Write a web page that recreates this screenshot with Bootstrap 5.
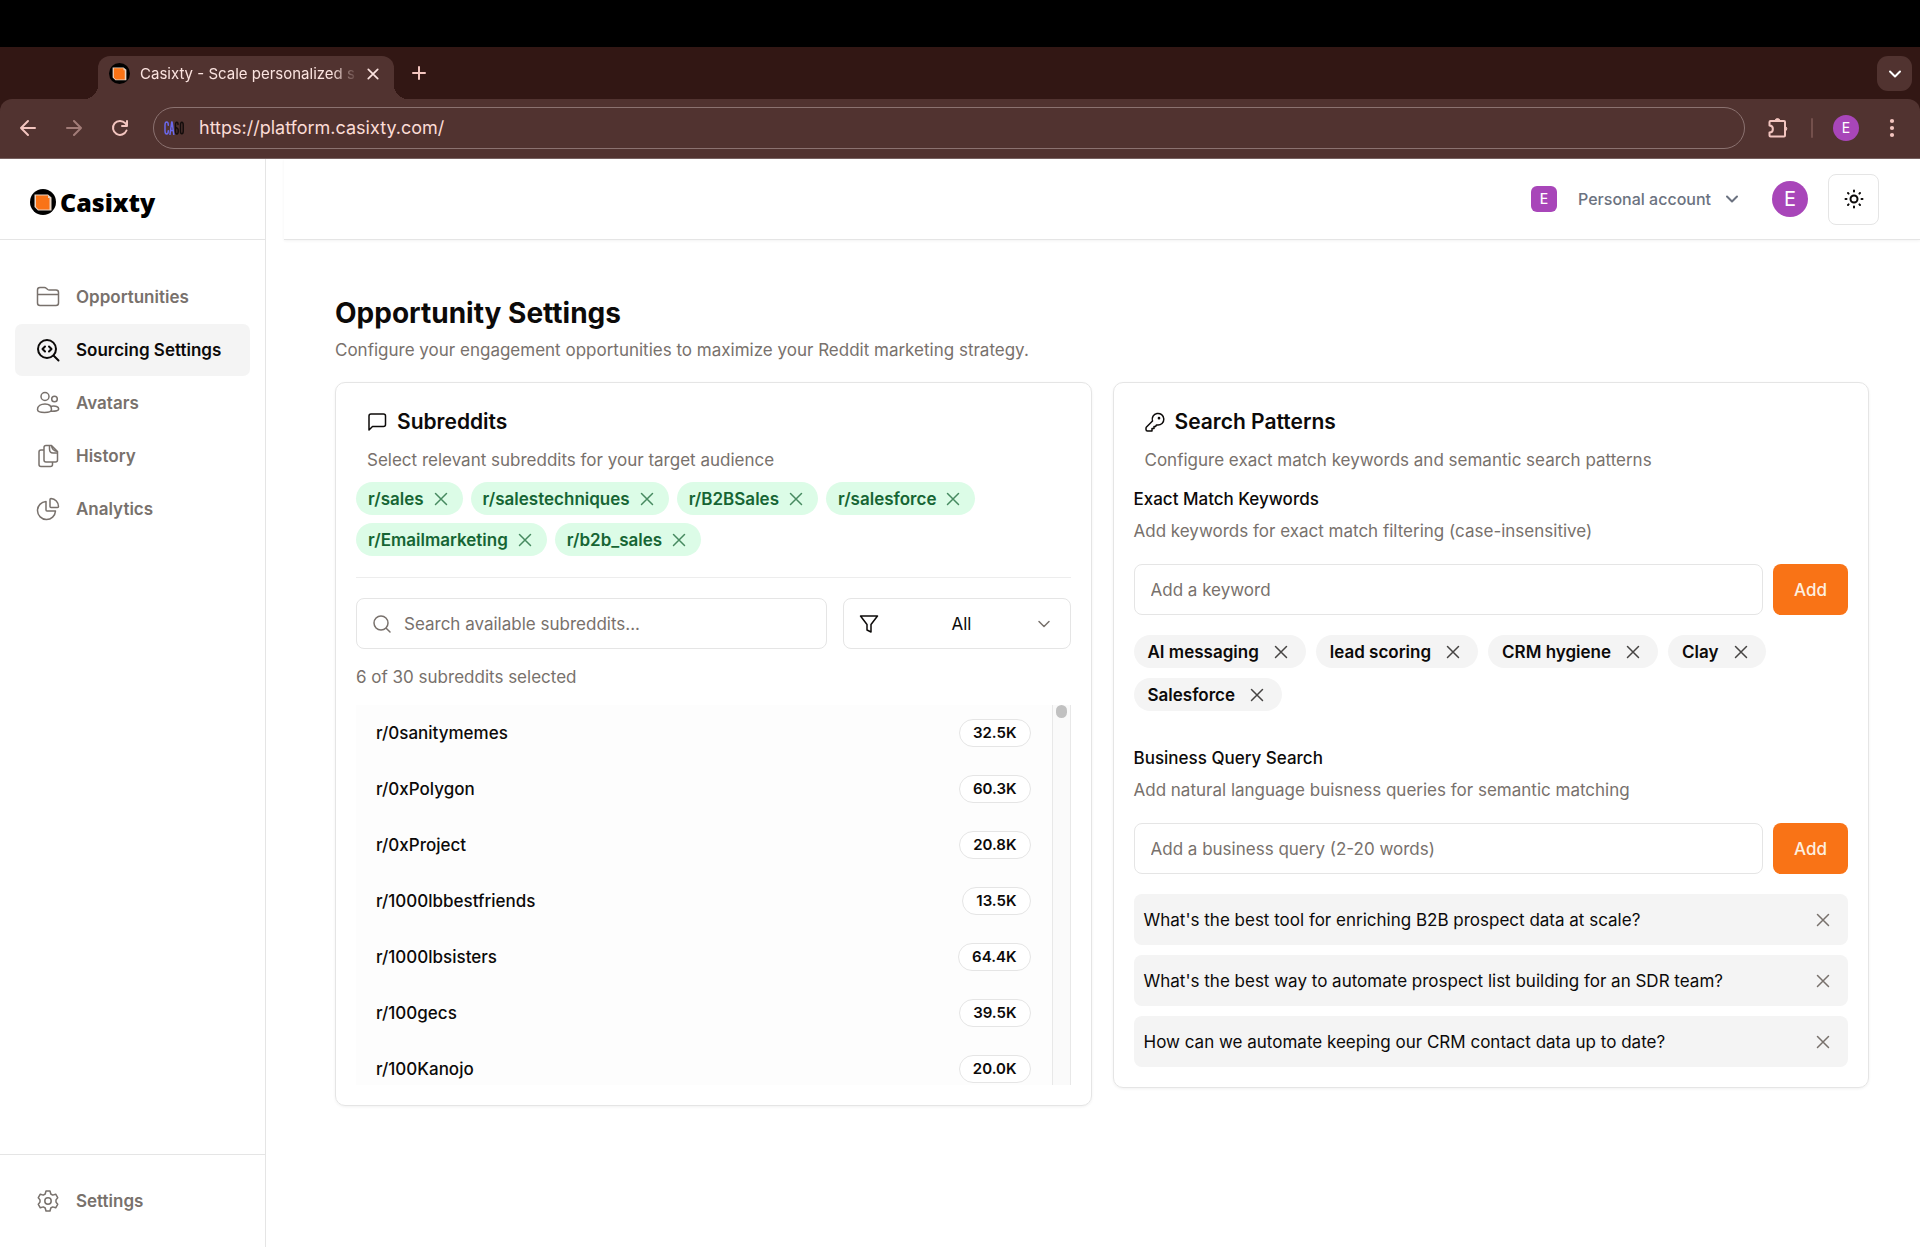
<!DOCTYPE html>
<html lang="en">
<head>
<meta charset="utf-8">
<meta name="viewport" content="width=device-width, initial-scale=1">
<title>Casixty - Scale personalized</title>
<link href="https://cdn.jsdelivr.net/npm/bootstrap@5.3.0/dist/css/bootstrap.min.css" rel="stylesheet">
<style>
  :root { --ink:#0c0a09; --muted:#78716c; --line:#e5e5e5; --strip:#321714; --bar:#513330; --rose:#f3c5bf; --purple:#a846b9; --orange:#f97316; }
  body { font-family: Inter, "Liberation Sans", sans-serif; font-size: 17px; line-height: 28px; color: var(--ink); background: #fff; }
  svg { display: block; flex: none; fill: none; stroke: currentColor; stroke-width: 1.5; stroke-linecap: round; stroke-linejoin: round; }
  .stroke-2 { stroke-width: 2; }
  button { color: inherit; }
  .bare { background: none; border: 0; padding: 0; }
  .muted { color: var(--muted); }

  /* browser frame */
  .bezel { height: 47px; background: #000; }
  .frame { background: var(--strip); color: var(--rose); }
  .strip { height: 52px; padding: 9px 8px 0 98px; }
  .tab-current { position: relative; width: 296px; height: 43px; padding: 0 15px 8px 11px; gap: 10px; background: var(--bar); border-radius: 12px 12px 0 0; color: #fbe3df; font-size: 15px; }
  .tab-current::before, .tab-current::after { content: ""; position: absolute; bottom: 0; width: 14px; height: 14px; }
  .tab-current::before { left: -14px; background: radial-gradient(circle at 0 0, transparent 14px, var(--bar) 14px); }
  .tab-current::after { right: -14px; background: radial-gradient(circle at 100% 0, transparent 14px, var(--bar) 14px); }
  .tab-name { -webkit-mask-image: linear-gradient(90deg, #000 192px, transparent 218px); mask-image: linear-gradient(90deg, #000 192px, transparent 218px); }
  .tab-menu { width: 35px; height: 35px; border-radius: 11px; background: var(--bar); color: #fff; }
  .toolbar { height: 60px; padding: 8px 23px 9px 16px; background: var(--bar); border-bottom: 1px solid #75605f; border-radius: 12px 12px 0 0; }
  .nav-tools { gap: 22px; padding-right: 21px; }
  .address { height: 42px; border: 1px solid #8b7270; border-radius: 21px; padding: 0 12px 0 10px; gap: 15px; margin-right: 21px; }
  .address input { background: none; border: 0; outline: 0; color: #fbdcd6; font-size: 18px; }
  .divide { width: 2px; height: 20px; background: #74504c; border-radius: 1px; margin: 0 20px 0 21px; }
  .disc { display: flex; align-items: center; justify-content: center; background: var(--purple); color: #fff; border-radius: 50%; flex: none; }
  .disc-s { width: 26px; height: 26px; font-size: 14px; }
  .disc-l { width: 36px; height: 36px; font-size: 20px; }

  /* app */
  .side { width: 266px; flex: none; border-right: 1px solid var(--line); }
  .brand { height: 81px; padding: 6px 30px 0; border-bottom: 1px solid var(--line); gap: 4px; }
  .brand-name { font: 900 25px/36px "Noto Sans", "Open Sans", sans-serif; color: #000; }
  .side-nav { padding: 31px 15px; gap: 1px; }
  .side-foot { padding: 20px 15px; border-top: 1px solid var(--line); }
  .side-link { height: 52px; padding: 0 21px; gap: 16px; border-radius: 7px; color: var(--muted); font-weight: 600; text-decoration: none; white-space: nowrap; }
  .side-link.current { background: #f4f4f4; color: var(--ink); }
  .topbar { height: 81px; margin-left: 18px; padding: 0 41px 0 0; border-bottom: 1px solid var(--line); box-shadow: 0 1px 3px rgba(0,0,0,.05); gap: 20px; }
  .account { color: #6b7280; font-weight: 500; font-size: 16px; gap: 14px; margin-right: 13px; }
  .account .disc { margin-right: 7px; }
  .theme { width: 51px; height: 51px; border: 1px solid var(--line); border-radius: 8px; }
  .work { padding: 53px 51px 40px 69px; }
  .page-title { font-size: 28px; line-height: 40px; font-weight: 700; margin: 0; }
  .page-sub { line-height: 34px; margin: 0 0 15px; }
  .panels { gap: 21px; }
  .panel { flex: 1 1 0; min-width: 0; border: 1px solid var(--line); border-radius: 10px; padding: 23px 20px 20px; box-shadow: 0 1px 3px rgba(0,0,0,.06); }
  .panel-head { padding: 0 11px; margin-bottom: 8px; }
  .panel-head h2 { font-size: 21px; line-height: 32px; font-weight: 600; margin: 0 0 8px; gap: 10px; }
  .pill { height: 33px; border-radius: 17px; font-weight: 600; white-space: nowrap; }
  .pill-green { background: #dcfce7; color: #166534; padding: 0 15px 0 12px; gap: 10px; }
  .pill-gray { background: #f4f4f4; padding: 0 18px 0 14px; gap: 15px; }
  .pill svg { opacity: .75; }
  .sub-pills { gap: 8px; padding-bottom: 21px; border-bottom: 1px solid #ededed; margin-bottom: 20px; }
  .key-pills { gap: 10px; margin: 20px 0 33px; }
  .field { height: 51px; border: 1px solid var(--line); border-radius: 8px; padding: 0 16px; background: #fff; min-width: 0; }
  .field input, .field select { background: none; border: 0; outline: 0; min-width: 0; padding: 0; color: var(--ink); }
  input::placeholder { color: var(--muted); opacity: 1; }
  .finder { gap: 13px; flex: 1; }
  .chooser { width: 228px; padding: 0 19px 0 15px; gap: 8px; }
  .chooser select { appearance: none; text-align: center; text-align-last: center; }
  .count { margin: 14px 0; }
  .listing { height: 380px; }
  .rows { background: #fdfdfd; overflow: hidden; }
  .sub-row { height: 56px; padding: 0 21px 0 20px; font-weight: 500; }
  .members { height: 28px; border: 1px solid var(--line); border-radius: 14px; padding: 0 13px; font-size: 15px; line-height: 26px; font-weight: 600; background: #fff; }
  .track { width: 19px; background: #fafafa; border: solid #e8e8e8; border-width: 0 1px; }
  .thumb { width: 11px; height: 13px; border-radius: 6px; background: #c1c1c1; }
  .block-title { font-size: 17px; line-height: 28px; font-weight: 500; margin: 0 0 4px; }
  .panel-head + .block-title { margin-top: 11px; }
  .block-note { margin: 0 0 19px; }
  .add { width: 75px; height: 51px; border: 0; border-radius: 8px; background: var(--orange); color: #fdf0e0; font-weight: 500; flex: none; }
  .add-row { gap: 10px; }
  .queries { gap: 10px; margin-top: 20px; }
  .query { height: 51px; border-radius: 8px; background: #f4f4f4; padding: 0 18px 0 10px; }
</style>
</head>
<body class="d-flex flex-column min-vh-100">
<svg width="0" height="0" class="position-absolute" aria-hidden="true">
  <symbol id="x" viewBox="0 0 14 14"><path d="M1.500 1.500l11 11M12.500 1.500l-11 11"/></symbol>
  <symbol id="down" viewBox="0 0 14 14"><path d="M2 4.500l5 5 5-5"/></symbol>
  <symbol id="mark60" viewBox="0 0 26 26"><circle cx="13" cy="13" r="13" fill="#000" stroke="none"/><path d="M4.500 5.500H18l3.500 3V21.500H8L4.500 18z" fill="#e8d5c6" stroke="none"/><path d="M6 6.500H18V9h1.500v11.500H8.500L6 18z" fill="#f97316" stroke="none"/></symbol>
</svg>

<div class="bezel"></div>
<header class="frame">
  <div class="strip d-flex align-items-start">
    <div class="tab-current d-flex align-items-center">
      <svg width="21" height="21"><use href="#mark60"/></svg>
      <span class="tab-name flex-grow-1 overflow-hidden text-nowrap">Casixty - Scale personalized s</span>
      <button class="bare" aria-label="Close tab"><svg class="stroke-2" width="12" height="12"><use href="#x"/></svg></button>
    </div>
    <button class="bare ms-3 mt-2" aria-label="New tab"><svg class="stroke-2" width="18" height="18" viewBox="0 0 18 18"><path d="M9 3v12M3 9h12"/></svg></button>
    <button class="bare tab-menu d-flex align-items-center justify-content-center ms-auto" aria-label="Search tabs"><svg class="stroke-2" width="14" height="14"><use href="#down"/></svg></button>
  </div>
  <div class="toolbar d-flex align-items-center">
    <div class="nav-tools d-flex">
      <button class="bare" aria-label="Back"><svg class="stroke-2" width="24" height="24" viewBox="0 0 24 24"><path d="M19 12H5M12 5l-7 7 7 7"/></svg></button>
      <button class="bare opacity-50" aria-label="Forward"><svg class="stroke-2" width="24" height="24" viewBox="0 0 24 24"><path d="M5 12h14M12 5l7 7-7 7"/></svg></button>
      <button class="bare" aria-label="Reload"><svg class="stroke-2" width="24" height="24" viewBox="0 0 24 24"><path d="M18.500 14.500a7 7 0 1 1-1.300-7.300L19 9.500M19 5v5h-5"/></svg></button>
    </div>
    <div class="address d-flex align-items-center flex-grow-1">
      <svg width="20" height="14" viewBox="0 0 20 14" stroke-linecap="butt"><g stroke="#6a68ea"><path d="M4.300 4.200C4.300 0 1 0 1 4.200v5.600C1 14 4.300 14 4.300 9.800M6 13.500L7.700 1h.4l1.700 12.500M6.500 9.500h2.800"/></g><g stroke="#130c0b"><path d="M14 3.500C14 .3 11.500.3 11.500 4v6c0 4 2.700 4 2.700 0s-2.700-4-2.700-1M16.500 4c0-3.700 2.700-3.700 2.700 0v6c0 3.700-2.700 3.700-2.700 0z"/></g></svg>
      <input class="flex-grow-1 p-0" type="text" aria-label="Address" value="https://platform.casixty.com/">
    </div>
    <button class="bare" aria-label="Extensions"><svg class="stroke-2" width="24" height="24" viewBox="0 0 24 24"><path d="M4.500 5H18q1 0 1 1v13.500q0 1-1 1H4.500q-1 0-1-1V16.500c4.500 0 4.500-7 0-7V6q0-1 1-1z"/><path d="M9 5a2.500 2.500 0 0 1 5 0zM19 10.500a2.300 2.300 0 0 1 0 4.500z" fill="currentColor" stroke-width="1"/></svg></button>
    <span class="divide"></span>
    <span class="disc disc-s">E</span>
    <button class="bare ms-4" aria-label="Menu"><svg class="ms-1" width="10" height="20" viewBox="0 0 10 20"><g fill="currentColor" stroke="none"><circle cx="5" cy="3" r="2.100"/><circle cx="5" cy="10" r="2.100"/><circle cx="5" cy="17" r="2.100"/></g></svg></button>
  </div>
</header>

<div class="d-flex flex-grow-1">
  <aside class="side d-flex flex-column">
    <a class="brand d-flex align-items-center text-decoration-none" href="#"><svg width="26" height="26"><use href="#mark60"/></svg><span class="brand-name">Casixty</span></a>
    <nav class="side-nav d-flex flex-column">
      <a class="side-link d-flex align-items-center" href="#"><svg width="24" height="24" viewBox="0 0 24 24"><path d="M1.500 5Q1.500 2.500 4 2.500h4.500q1 0 1.800.8l1.400 1.200q.7.500 1.600.5H20q2.500 0 2.500 2.500V18q0 2.500-2.500 2.500H4Q1.500 20.500 1.500 18zM1.500 9.500h21"/></svg>Opportunities</a>
      <a class="side-link current d-flex align-items-center" href="#" aria-current="page"><svg class="stroke-2" width="24" height="24" viewBox="0 0 24 24"><circle cx="11" cy="11" r="9"/><path d="M17.500 17.500L22.500 22.500M9 8.500L6.500 11 9 13.500M13 8.500l2.500 2.500-2.500 2.500"/></svg>Sourcing Settings</a>
      <a class="side-link d-flex align-items-center" href="#"><svg width="24" height="24" viewBox="0 0 24 24"><circle cx="9" cy="5.500" r="4"/><circle cx="18.500" cy="8" r="2.800"/><path d="M1.500 18.500c0-3.500 3.500-5.500 7.500-5.500s6.500 2 6.500 5.500c0 2-3 3-7 3s-7-1-7-3zM15.500 15.200c4-1 7.200.8 7.200 2.800 0 1.500-2.500 2.300-7.500 2.200"/></svg>Avatars</a>
      <a class="side-link d-flex align-items-center" href="#"><svg width="24" height="24" viewBox="0 0 24 24"><path d="M8 3.500Q8 1.500 10 1.500h5.500l6 6V16q0 2-2 2H10q-2 0-2-2zM13.500 1.500v3.500q0 4 3.500 4h4.500M15.500 1.500q.5 5.500 6 6M8 6H5Q3 6 3 8v12.500q0 2 2 2h9.500q2 0 2-2V18"/></svg>History</a>
      <a class="side-link d-flex align-items-center" href="#"><svg width="24" height="24" viewBox="0 0 24 24"><path d="M10 4.500a9 9 0 1 0 9.500 9.500H11q-1 0-1-1zM14 2.500q0-1 1-1a8 8 0 0 1 7.500 8q0 1-1 1H15q-1 0-1-1z"/></svg>Analytics</a>
    </nav>
    <div class="side-foot mt-auto">
      <a class="side-link d-flex align-items-center" href="#"><svg width="24" height="24" viewBox="0 0 24 24"><circle cx="12" cy="12" r="3.200"/><path d="M10 2h4l.8 3 1.900 1.100 3-.9 2 3.500-1.700 2.200v2.200l1.700 2.200-2 3.500-3-.9-1.900 1.100-.8 3h-4l-.8-3-1.900-1.100-3 .9-2-3.500L4 13.100v-2.200L2.300 8.700l2-3.500 3 .9L9.200 5z"/></svg>Settings</a>
    </div>
  </aside>

  <div class="flex-grow-1 overflow-hidden">
    <div class="topbar d-flex align-items-center justify-content-end">
      <button class="bare account d-flex align-items-center"><span class="disc disc-s rounded-2">E</span><span>Personal account</span><svg class="stroke-2" width="14" height="14"><use href="#down"/></svg></button>
      <button class="bare disc disc-l" aria-label="Profile">E</button>
      <button class="bare theme d-flex align-items-center justify-content-center" aria-label="Theme"><svg class="stroke-2" width="20" height="20" viewBox="0 0 20 20"><circle cx="10" cy="10" r="3.500"/><path d="M10 1.500v1M10 17.500v1M1.500 10h1M17.500 10h1M4 4l.6.6M15.400 15.400l.6.6M4 16l.6-.6M15.400 4.600L16 4"/></svg></button>
    </div>

    <main class="work">
      <h1 class="page-title">Opportunity Settings</h1>
      <p class="page-sub muted">Configure your engagement opportunities to maximize your Reddit marketing strategy.</p>
      <div class="panels d-flex align-items-start">
        <section class="panel">
          <div class="panel-head">
            <h2 class="d-flex align-items-center"><svg width="20" height="20" viewBox="0 0 20 20"><path d="M2 18V4q0-2 2-2h12.500q2 0 2 2v8.500q0 2-2 2H5.500z"/></svg>Subreddits</h2>
            <div class="muted">Select relevant subreddits for your target audience</div>
          </div>
          <div class="sub-pills d-flex flex-wrap">
            <span class="pill pill-green d-flex align-items-center">r/sales<button class="bare" aria-label="Remove r/sales"><svg width="14" height="14"><use href="#x"/></svg></button></span>
            <span class="pill pill-green d-flex align-items-center">r/salestechniques<button class="bare" aria-label="Remove r/salestechniques"><svg width="14" height="14"><use href="#x"/></svg></button></span>
            <span class="pill pill-green d-flex align-items-center">r/B2BSales<button class="bare" aria-label="Remove r/B2BSales"><svg width="14" height="14"><use href="#x"/></svg></button></span>
            <span class="pill pill-green d-flex align-items-center">r/salesforce<button class="bare" aria-label="Remove r/salesforce"><svg width="14" height="14"><use href="#x"/></svg></button></span>
            <span class="pill pill-green d-flex align-items-center">r/Emailmarketing<button class="bare" aria-label="Remove r/Emailmarketing"><svg width="14" height="14"><use href="#x"/></svg></button></span>
            <span class="pill pill-green d-flex align-items-center">r/b2b_sales<button class="bare" aria-label="Remove r/b2b_sales"><svg width="14" height="14"><use href="#x"/></svg></button></span>
          </div>
          <div class="d-flex gap-3">
            <label class="field finder d-flex align-items-center muted"><svg width="18" height="18" viewBox="0 0 18 18"><circle cx="8" cy="8" r="7"/><path d="M13.200 13.200L17 17"/></svg><input class="flex-grow-1" type="text" aria-label="Search subreddits" placeholder="Search available subreddits..."></label>
            <label class="field chooser d-flex align-items-center"><svg width="20" height="20" viewBox="0 0 20 20"><path d="M1.500 2h17l-6.500 8.500V18l-4-2v-5.500z"/></svg><select class="flex-grow-1 ps-2" aria-label="Filter"><option>All</option></select><svg class="muted" width="14" height="14"><use href="#down"/></svg></label>
          </div>
          <div class="count muted">6 of 30 subreddits selected</div>
          <div class="listing d-flex">
            <ul class="rows list-unstyled flex-grow-1 mb-0">
              <li class="sub-row d-flex align-items-center justify-content-between">r/0sanitymemes<span class="members">32.5K</span></li>
              <li class="sub-row d-flex align-items-center justify-content-between">r/0xPolygon<span class="members">60.3K</span></li>
              <li class="sub-row d-flex align-items-center justify-content-between">r/0xProject<span class="members">20.8K</span></li>
              <li class="sub-row d-flex align-items-center justify-content-between">r/1000lbbestfriends<span class="members">13.5K</span></li>
              <li class="sub-row d-flex align-items-center justify-content-between">r/1000lbsisters<span class="members">64.4K</span></li>
              <li class="sub-row d-flex align-items-center justify-content-between">r/100gecs<span class="members">39.5K</span></li>
              <li class="sub-row d-flex align-items-center justify-content-between">r/100Kanojo<span class="members">20.0K</span></li>
            </ul>
            <div class="track d-flex justify-content-center"><div class="thumb"></div></div>
          </div>
        </section>

        <section class="panel">
          <div class="panel-head">
            <h2 class="d-flex align-items-center"><svg width="20" height="20" viewBox="0 0 20 20"><path d="M1 16.200q0-.7.500-1.200l6-6A5.800 5.800 0 1 1 12.500 13h-1l-1 1.500H9V16.500H7V19H2.500Q1 19 1 17.500z"/><circle cx="14" cy="6.200" r=".6" fill="currentColor"/></svg>Search Patterns</h2>
            <div class="muted">Configure exact match keywords and semantic search patterns</div>
          </div>
          <h3 class="block-title">Exact Match Keywords</h3>
          <p class="block-note muted">Add keywords for exact match filtering (case-insensitive)</p>
          <div class="add-row d-flex">
            <div class="field d-flex flex-grow-1"><input class="flex-grow-1" type="text" aria-label="Keyword" placeholder="Add a keyword"></div>
            <button class="add">Add</button>
          </div>
          <div class="key-pills d-flex flex-wrap">
            <span class="pill pill-gray d-flex align-items-center">AI messaging<button class="bare" aria-label="Remove AI messaging"><svg width="14" height="14"><use href="#x"/></svg></button></span>
            <span class="pill pill-gray d-flex align-items-center">lead scoring<button class="bare" aria-label="Remove lead scoring"><svg width="14" height="14"><use href="#x"/></svg></button></span>
            <span class="pill pill-gray d-flex align-items-center">CRM hygiene<button class="bare" aria-label="Remove CRM hygiene"><svg width="14" height="14"><use href="#x"/></svg></button></span>
            <span class="pill pill-gray d-flex align-items-center">Clay<button class="bare" aria-label="Remove Clay"><svg width="14" height="14"><use href="#x"/></svg></button></span>
            <span class="pill pill-gray d-flex align-items-center">Salesforce<button class="bare" aria-label="Remove Salesforce"><svg width="14" height="14"><use href="#x"/></svg></button></span>
          </div>
          <h3 class="block-title">Business Query Search</h3>
          <p class="block-note muted">Add natural language buisness queries for semantic matching</p>
          <div class="add-row d-flex">
            <div class="field d-flex flex-grow-1"><input class="flex-grow-1" type="text" aria-label="Business query" placeholder="Add a business query (2-20 words)"></div>
            <button class="add">Add</button>
          </div>
          <ul class="queries list-unstyled d-flex flex-column mb-0">
            <li class="query d-flex align-items-center justify-content-between">What's the best tool for enriching B2B prospect data at scale?<button class="bare muted" aria-label="Remove query"><svg width="14" height="14"><use href="#x"/></svg></button></li>
            <li class="query d-flex align-items-center justify-content-between">What's the best way to automate prospect list building for an SDR team?<button class="bare muted" aria-label="Remove query"><svg width="14" height="14"><use href="#x"/></svg></button></li>
            <li class="query d-flex align-items-center justify-content-between">How can we automate keeping our CRM contact data up to date?<button class="bare muted" aria-label="Remove query"><svg width="14" height="14"><use href="#x"/></svg></button></li>
          </ul>
        </section>
      </div>
    </main>
  </div>
</div>
<script src="https://cdn.jsdelivr.net/npm/bootstrap@5.3.0/dist/js/bootstrap.bundle.min.js"></script>
</body>
</html>
